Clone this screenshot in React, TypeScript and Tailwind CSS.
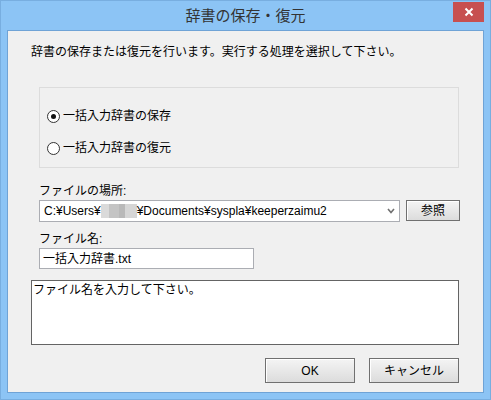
import React from "react";

const font = { fontFamily: '"Liberation Sans", "Noto Sans CJK JP", "Noto Sans", sans-serif' };

function Radio({ checked, label }: { checked?: boolean; label: string }) {
  return (
    <div className="flex items-center h-[16px]">
      <span className="w-[13px] h-[13px] rounded-full border border-[#333] bg-white flex items-center justify-center">
        {checked && <span className="w-[5px] h-[5px] rounded-full bg-[#111]" />}
      </span>
      <span className="ml-[3px] text-[12px] leading-[16px] text-black">{label}</span>
    </div>
  );
}

function Btn({ label, w, h }: { label: string; w: string; h: string }) {
  return (
    <div
      className={`${w} ${h} flex items-center justify-center text-[12px] text-black border border-[#707070] bg-gradient-to-b from-[#F4F4F4] to-[#DCDCDC] shadow-[inset_1px_1px_0_#fff]`}
    >
      {label}
    </div>
  );
}

export default function App() {
  return (
    <div style={font} className="relative w-[491px] h-[400px] bg-[#8CC4F5] border border-[#78AEE0] flex flex-col">
      <div className="h-[29px] flex items-center justify-center text-[15px] text-[#333] pt-[1px]">
        辞書の保存・復元
      </div>
      <div className="absolute top-[1px] right-[6px] w-[31px] h-[20px] bg-[#C75050] flex items-center justify-center">
        <svg width="10" height="10" viewBox="0 0 10 10">
          <path d="M1.5 1.5 L8.5 8.5 M8.5 1.5 L1.5 8.5" stroke="#fff" strokeWidth="2" />
        </svg>
      </div>
      <div className="ml-[6px] w-[477px] h-[363px] bg-[#F0F0F0] border border-[#6FA3D6] flex flex-col">
        <div className="ml-[23px] mt-[13px] text-[12px] leading-[16px] text-black">
          辞書の保存または復元を行います。実行する処理を選択して下さい。
        </div>
        <div className="ml-[31px] mt-[27px] w-[420px] h-[81px] border border-[#DCDCDC] flex flex-col pl-[7px] pt-[20px] gap-[16px]">
          <Radio checked label="一括入力辞書の保存" />
          <Radio label="一括入力辞書の復元" />
        </div>
        <div className="ml-[31px] mt-[16px] text-[12px] leading-[14px] text-black">ファイルの場所:</div>
        <div className="ml-[31px] mt-[2px] flex items-start">
          <div className="w-[361px] h-[22px] border border-[#ABADB3] bg-white flex items-center pl-[4px] text-[12px] text-black">
            <span>C:¥Users¥</span>
            <span className="flex h-[14px] w-[36px]">
              <span className="w-[8px] bg-[#DADADA]" />
              <span className="w-[10px] bg-[#C4C4C4]" />
              <span className="w-[6px] bg-[#B9B9B9]" />
              <span className="w-[12px] bg-[#D6D6D6]" />
            </span>
            <span>¥Documents¥syspla¥keeperzaimu2</span>
            <span className="ml-auto mr-[4px] flex items-center">
              <svg width="8" height="6" viewBox="0 0 8 6">
                <path d="M1 1 L4 4.5 L7 1" stroke="#707070" strokeWidth="1.6" fill="none" />
              </svg>
            </span>
          </div>
          <div className="ml-[6px]">
            <Btn label="参照" w="w-[54px]" h="h-[21px]" />
          </div>
        </div>
        <div className="ml-[31px] mt-[10px] text-[12px] leading-[14px] text-black">ファイル名:</div>
        <div className="ml-[31px] mt-[2px] w-[215px] h-[21px] border border-[#ABADB3] bg-white flex items-center pl-[3px] text-[12px] text-black">
          一括入力辞書.txt
        </div>
        <div className="ml-[23px] mt-[11px] w-[428px] h-[65px] border border-[#646464] bg-white text-[12px] leading-[16px] text-black pl-[1px] pt-[1px]">
          ファイル名を入力して下さい。
        </div>
        <div className="mt-[13px] flex ml-[257px] gap-[14px]">
          <Btn label="OK" w="w-[90px]" h="h-[25px]" />
          <Btn label="キャンセル" w="w-[90px]" h="h-[25px]" />
        </div>
      </div>
    </div>
  );
}
